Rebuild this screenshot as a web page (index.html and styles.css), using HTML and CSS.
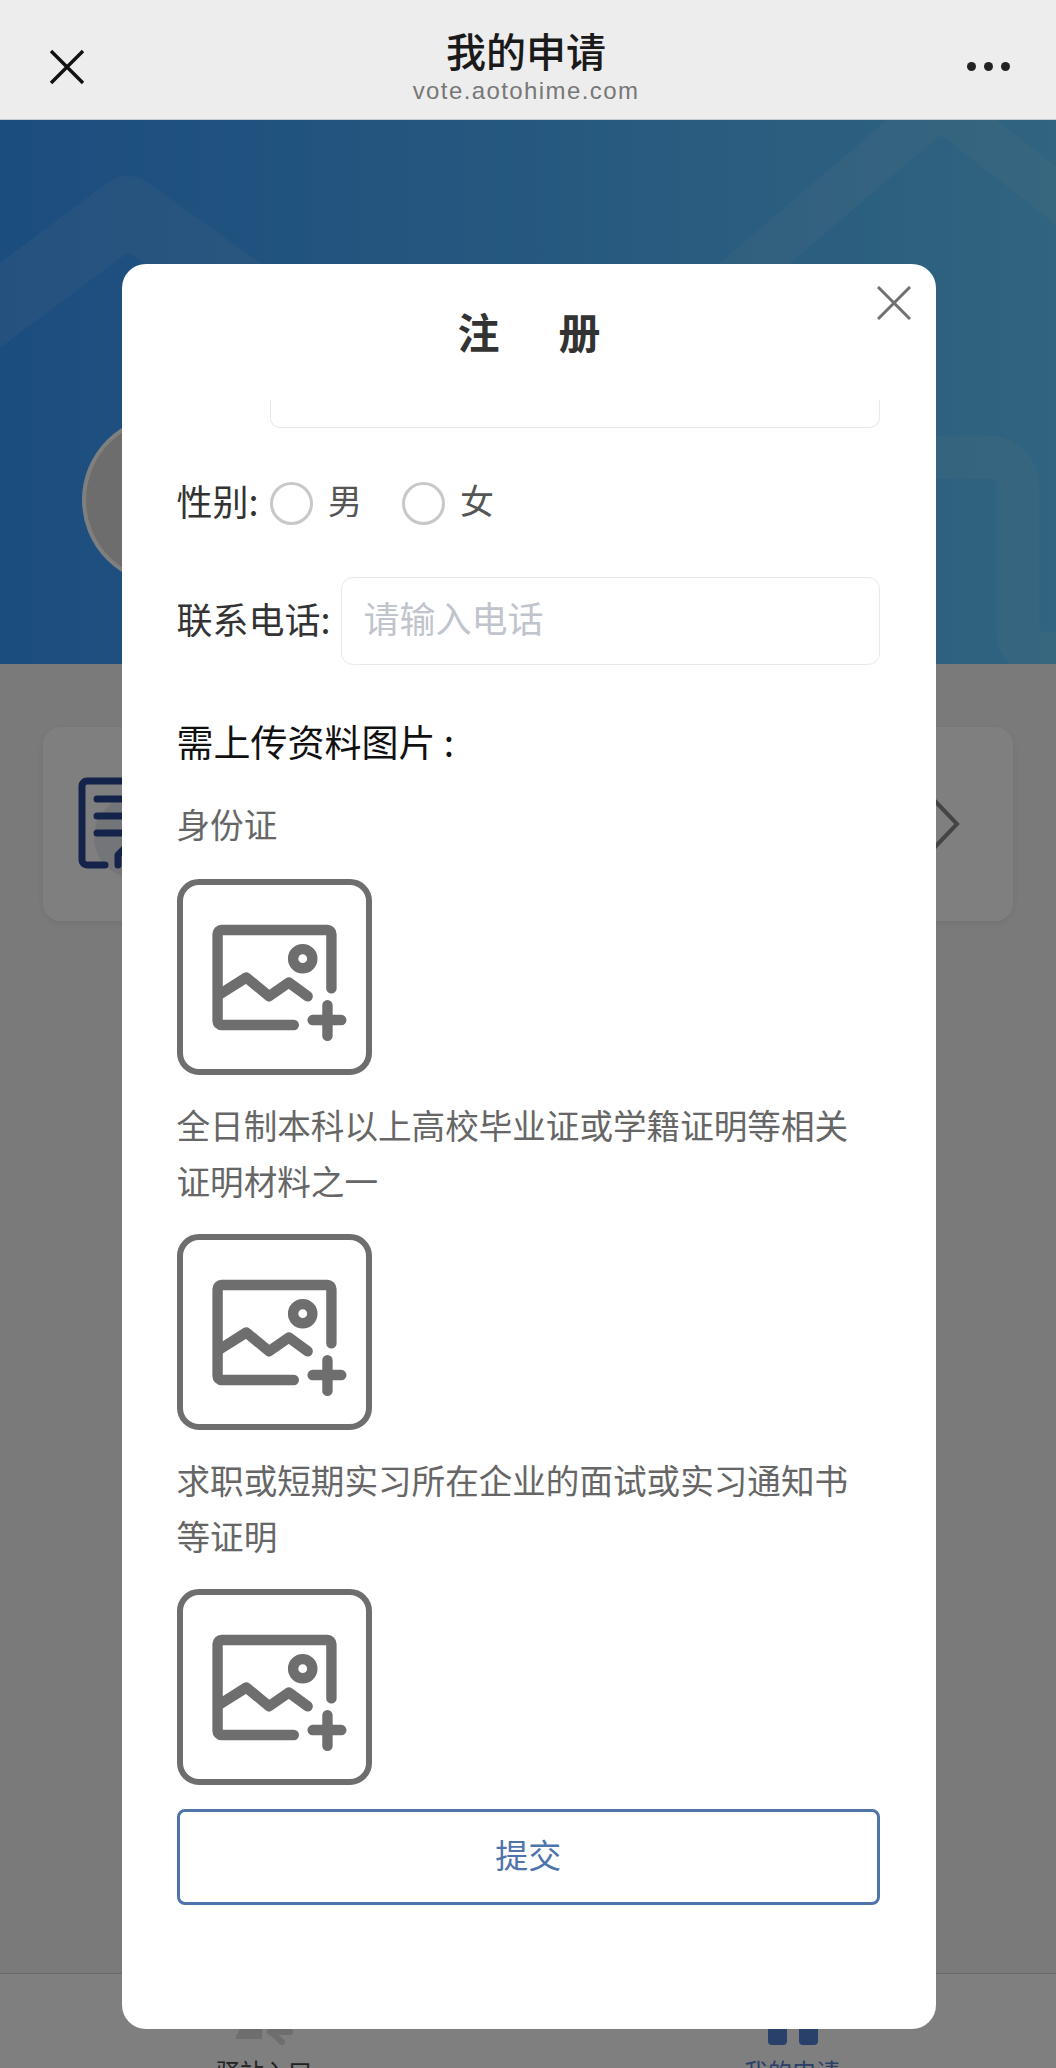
FILE: index.html
```html
<!DOCTYPE html>
<html lang="zh-CN">
<head>
    <meta charset="UTF-8">
    <meta name="viewport" content="width=device-width, initial-scale=1.0">
    <title>我的申请</title>
    <link rel="stylesheet" href="styles.css">
</head>
<body>

    <svg class="sprite" width="0" height="0">
        <symbol id="icon-add-image" viewBox="0 0 197 197">
            <g fill="none" stroke="#6e6e6e" stroke-width="10.5" stroke-linecap="round" stroke-linejoin="round">
                <path d="M118 147H45a4 4 0 0 1-4-4V55a4 4 0 0 1 4-4H152a4 4 0 0 1 4 4V110"/>
                <path d="M43 116L70 99L93 118L113 104L132 118" stroke-linecap="round"/>
                <circle cx="127" cy="80" r="9.7"/>
                <path d="M137 142H166M152 127V158"/>
            </g>
        </symbol>
    </svg>

    <header class="topbar">
        <svg class="topbar-close" viewBox="0 0 36 36">
            <path d="M2 2L34 34M34 2L2 34" fill="none" stroke="#111" stroke-width="3.4"/>
        </svg>
        <div class="topbar-title">
            <div class="topbar-name">我的申请</div>
            <div class="topbar-url">vote.aotohime.com</div>
        </div>
        <div class="topbar-more"><span></span><span></span><span></span></div>
    </header>

    <div class="page">
        <main class="content">
            <section class="hero">
                <svg class="hero-lines" viewBox="0 0 1056 544">
                    <g fill="none" stroke="#fff" stroke-opacity="0.09" stroke-linejoin="round" stroke-linecap="round">
                        <path d="M-60 230L128 90L330 235" stroke-width="68"/>
                        <path d="M700 190L940 -15L1100 110" stroke-width="46"/>
                        <path d="M920 337H985Q1018 337 1018 372V515Q1018 534 1056 534" stroke-width="43"/>
                    </g>
                </svg>
                <div class="avatar"></div>
            </section>

            <section class="apply-card">
                <svg class="apply-icon" viewBox="0 0 100 110">
                    <circle cx="57" cy="66" r="41" fill="#e8eaf2"/>
                    <g fill="none" stroke="#284692" stroke-width="7" stroke-linecap="round" stroke-linejoin="round">
                        <path d="M27 94H9a5 5 0 0 1-5-5V15a5 5 0 0 1 5-5H70"/>
                        <path d="M19 28H70M19 45H70M19 62H50"/>
                        <path d="M40 94V84L52 72"/>
                    </g>
                </svg>
                <svg class="apply-arrow" viewBox="0 0 28 50">
                    <path d="M2 2L24 25L2 48" fill="none" stroke="#888" stroke-width="4" stroke-linecap="round"/>
                </svg>
            </section>
        </main>

        <nav class="tabbar">
            <div class="tab">
                <svg class="tab-icon" viewBox="0 0 60 50">
                    <path d="M7 32H28V44H2V41Z" fill="#dcdcdc"/>
                    <path d="M36 36L48 47M36 37H56" fill="none" stroke="#dcdcdc" stroke-width="6" stroke-linecap="round"/>
                </svg>
                <span>驿站入口</span>
            </div>
            <div class="tab tab-active">
                <svg class="tab-icon" viewBox="0 0 60 50">
                    <rect x="6" y="0" width="19" height="50" rx="4" fill="#5280d6"/>
                    <rect x="37" y="0" width="19" height="50" rx="4" fill="#5280d6"/>
                </svg>
                <span>我的申请</span>
            </div>
        </nav>

        <div class="mask"></div>

        <div class="modal">
            <svg class="modal-close" viewBox="0 0 34 34">
                <path d="M1 1L33 33M33 1L1 33" fill="none" stroke="#707070" stroke-width="3"/>
            </svg>
            <h2 class="modal-title"><span>注</span><span>册</span></h2>

            <div class="modal-body">
                <div class="input-cut"></div>

                <div class="form-row gender-row">
                    <label class="form-label">性别:</label>
                    <div class="radio"></div>
                    <span class="radio-text">男</span>
                    <div class="radio"></div>
                    <span class="radio-text">女</span>
                </div>

                <div class="form-row phone-row">
                    <label class="form-label">联系电话:</label>
                    <div class="input">请输入电话</div>
                </div>

                <div class="upload-title">需上传资料图片 :</div>

                <div class="upload-label first">身份证</div>
                <div class="upload-box"><svg><use href="#icon-add-image"/></svg></div>

                <div class="upload-label">全日制本科以上高校毕业证或学籍证明等相关证明材料之一</div>
                <div class="upload-box"><svg><use href="#icon-add-image"/></svg></div>

                <div class="upload-label">求职或短期实习所在企业的面试或实习通知书等证明</div>
                <div class="upload-box"><svg><use href="#icon-add-image"/></svg></div>

                <button class="submit-btn">提交</button>
            </div>
        </div>
    </div>

</body>
</html>
```

FILE: styles.css
```css
* {
    box-sizing: border-box;
}
html, body {
    margin: 0;
    height: 2068px;
    overflow: hidden;
}
body {
    font-family: "Noto Sans CJK SC", sans-serif;
    background: #f5f5f5;
    display: flex;
    flex-direction: column;
}
.sprite {
    position: absolute;
}

/* top bar */
.topbar {
    height: 120px;
    flex: none;
    background: #ededed;
    border-bottom: 1px solid #c4ccd2;
    display: flex;
    align-items: center;
    justify-content: space-between;
    padding: 0 46px 0 49px;
}
.topbar-close {
    width: 36px;
    height: 36px;
    margin-top: 14px;
}
.topbar-title {
    text-align: center;
    margin-top: 13px;
}
.topbar-name {
    font-size: 40px;
    line-height: 46px;
    font-weight: 500;
    color: #1a1a1a;
}
.topbar-url {
    font-family: "Liberation Sans", sans-serif;
    font-size: 24px;
    line-height: 28px;
    margin-top: 4px;
    letter-spacing: 1.4px;
    color: #777;
}
.topbar-more {
    display: flex;
    gap: 8px;
    margin-top: 14px;
}
.topbar-more span {
    width: 9px;
    height: 9px;
    border-radius: 50%;
    background: #222;
}

/* page behind the dialog */
.page {
    position: relative;
    flex: 1;
    display: flex;
    flex-direction: column;
    overflow: hidden;
}
.content {
    flex: 1;
}
.hero {
    position: relative;
    height: 544px;
    background: linear-gradient(90deg, #389aff, #60c8ff);
    overflow: hidden;
}
.hero-lines {
    position: absolute;
    left: 0;
    top: 0;
    width: 1056px;
    height: 544px;
}
.avatar {
    position: absolute;
    left: 82px;
    top: 295px;
    width: 170px;
    height: 170px;
    border-radius: 50%;
    background: #dadada;
    border: 4px solid #fff;
}
.apply-card {
    height: 194px;
    margin: 63px 43px 0;
    padding: 0 52px 0 35px;
    background: #fff;
    border-radius: 18px;
    box-shadow: 0 2px 8px rgba(0, 0, 0, 0.08);
    display: flex;
    align-items: center;
    justify-content: space-between;
}
.apply-icon {
    width: 100px;
    height: 110px;
    margin-top: 3px;
}
.apply-arrow {
    width: 28px;
    height: 50px;
}
.tabbar {
    height: 95px;
    flex: none;
    background: #fff;
    border-top: 1px solid #d4d4d4;
    display: flex;
    overflow: hidden;
}
.tab {
    flex: 1;
    display: flex;
    flex-direction: column;
    align-items: center;
    padding-top: 21px;
    font-size: 24px;
    line-height: 30px;
    color: #444;
}
.tab-icon {
    width: 60px;
    height: 50px;
    margin-bottom: 11px;
    flex: none;
}
.tab-active {
    color: #5480d0;
}
.mask {
    position: absolute;
    inset: 0;
    background: rgba(0, 0, 0, 0.5);
}

/* dialog */
.modal {
    position: absolute;
    left: 122px;
    top: 144px;
    width: 814px;
    height: 1765px;
    background: #fff;
    border-radius: 24px;
}
.modal-close {
    position: absolute;
    right: 25px;
    top: 22px;
    width: 34px;
    height: 34px;
}
.modal-title {
    height: 136px;
    margin: 0;
    padding-bottom: 3px;
    display: flex;
    align-items: center;
    justify-content: center;
    gap: 59px;
    font-size: 42px;
    font-weight: 700;
    color: #333;
}
.modal-body {
    padding: 0 56px 0 54.5px;
}
.input-cut {
    height: 28px;
    margin-left: 93.5px;
    border: 1.5px solid #e6e8ec;
    border-top: none;
    border-radius: 0 0 10px 10px;
}
.form-row {
    display: flex;
    align-items: center;
    color: #333;
}
.form-label {
    font-size: 36px;
    line-height: 42px;
    margin-bottom: 7px;
    white-space: nowrap;
}
.gender-row {
    height: 42px;
    margin-top: 54px;
}
.gender-row .form-label {
    width: 93.5px;
}
.radio {
    width: 43px;
    height: 43px;
    border: 3px solid #c8c8c8;
    border-radius: 50%;
    flex: none;
}
.radio-text {
    width: 89px;
    padding-left: 15px;
    margin-bottom: 7px;
    font-size: 34px;
    line-height: 42px;
    color: #555;
}
.phone-row {
    height: 88px;
    margin-top: 53px;
    gap: 10px;
}
.input {
    flex: 1;
    height: 88px;
    padding-left: 22px;
    border: 1.5px solid #e6e8ec;
    border-radius: 12px;
    font-size: 36px;
    line-height: 79px;
    color: #c0c4cc;
}
.upload-title {
    margin-top: 48px;
    font-size: 37px;
    line-height: 56px;
    color: #111;
}
.upload-label {
    margin-top: 21.5px;
    font-size: 33.6px;
    line-height: 56px;
    color: #666;
}
.upload-label.first {
    margin-top: 27px;
}
.upload-box {
    width: 195px;
    height: 196px;
    margin-top: 25.5px;
    position: relative;
    border: 6px solid #6e6e6e;
    border-radius: 22px;
}
.upload-label.first + .upload-box {
    margin-top: 27px;
}
.upload-box svg {
    position: absolute;
    left: -6px;
    top: -6px;
    width: 195px;
    height: 196px;
}
.submit-btn {
    display: block;
    width: 100%;
    height: 96px;
    margin-top: 24px;
    padding-bottom: 7px;
    background: #fff;
    border: 3px solid #4f73ab;
    border-radius: 8px;
    font-family: inherit;
    font-size: 33px;
    color: #4f73ab;
}
```
